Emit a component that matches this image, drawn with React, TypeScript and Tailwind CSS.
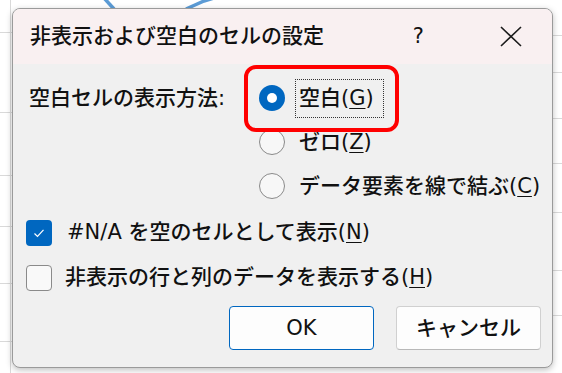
// 背景のシート（グリッド線とグラフの線だけ）
function SheetBackdrop() {
  const leftLines = [32, 112, 175, 226, 283, 341];
  const rightLines = [35, 72, 118, 163, 212, 270, 315];
  return (
    <svg className="absolute inset-0" width="562" height="373" viewBox="0 0 562 373">
      <rect x="0" y="0" width="562" height="373" fill="#ffffff" />
      <line x1="10.5" y1="0" x2="10.5" y2="373" stroke="#d9d9d9" />
      {leftLines.map(y => (
        <line key={'l' + y} x1="0" y1={y + 0.5} x2="12" y2={y + 0.5} stroke="#d9d9d9" />
      ))}
      {rightLines.map(y => (
        <line key={'r' + y} x1="552" y1={y + 0.5} x2="562" y2={y + 0.5} stroke="#d9d9d9" />
      ))}
      <path d="M104 -2 L114 9" stroke="#5b9bd5" strokeWidth="3.5" fill="none" />
      <path d="M186 9 L204 1 L214 -2" stroke="#5b9bd5" strokeWidth="3.5" fill="none" />
    </svg>
  );
}

function Radio({ checked }: { checked?: boolean }) {
  if (checked) {
    return (
      <span className="flex h-[26px] w-[26px] shrink-0 items-center justify-center rounded-full bg-[#0067c0]">
        <span className="h-[10px] w-[10px] rounded-full bg-white" />
      </span>
    );
  }
  return <span className="h-[26px] w-[26px] shrink-0 rounded-full border-[1.5px] border-[#8a8a8a] bg-[#f7f7f7]" />;
}

function Checkbox({ checked }: { checked?: boolean }) {
  if (checked) {
    return (
      <span className="flex h-[26px] w-[26px] shrink-0 items-center justify-center rounded-[4px] bg-[#0067c0]">
        <svg width="14" height="14" viewBox="0 0 14 14">
          <path d="M2.5 7.5 L5.5 10.5 L11.5 3.8" stroke="#ffffff" strokeWidth="1.2" fill="none" />
        </svg>
      </span>
    );
  }
  return <span className="h-[26px] w-[26px] shrink-0 rounded-[4px] border-[1.5px] border-[#8a8a8a] bg-[#f9f9f9]" />;
}

// 下線付きのアクセスキー
function Key({ k }: { k: string }) {
  return <span className="underline underline-offset-[3px] decoration-1">{k}</span>;
}

export default function App() {
  return (
    <div
      className="relative h-[373px] w-[562px] overflow-hidden pl-[12px] pt-[8px] font-medium text-[#111111]"
      style={{ fontFamily: '"DejaVu Sans", "Noto Sans CJK JP", sans-serif' }}
    >
      <SheetBackdrop />

      <div className="relative flex h-[360px] w-[541px] flex-col overflow-hidden rounded-[8px] border border-[#9a9a9a] bg-[#f0f0f0] shadow-[0_2px_6px_rgba(0,0,0,0.25)]">
        {/* タイトルバー */}
        <div className="flex h-[55px] shrink-0 items-center bg-[#f9f0f1] pl-[17px] text-[21px] leading-none">
          <span className="flex-1">非表示および空白のセルの設定</span>
          <span className="mr-[76px] text-[21px]">?</span>
          <svg className="mr-[30px]" width="22" height="21" viewBox="0 0 22 21">
            <path d="M1 1 L21 20 M21 1 L1 20" stroke="#1b1b1b" strokeWidth="1.6" fill="none" />
          </svg>
        </div>

        {/* 本文 */}
        <div className="flex flex-1 flex-col pt-[12px] text-[21px] leading-none">
          <div className="flex">
            <div className="flex h-[44px] w-[246px] shrink-0 items-center pl-[16px]">空白セルの表示方法:</div>
            <div className="flex flex-col">
              <div className="relative flex h-[44px] items-center">
                <Radio checked />
                <span className="ml-[10px] border border-dotted border-[#333] py-[8px] pl-[3px] pr-[9px]">
                  空白(<Key k="G" />)
                </span>
                <span className="absolute left-[-15px] top-[-11px] h-[67px] w-[155px] rounded-[12px] border-[4px] border-[#ff0000]" />
              </div>
              <div className="flex h-[44px] items-center">
                <Radio />
                <span className="ml-[14px]">
                  ゼロ(<Key k="Z" />)
                </span>
              </div>
              <div className="flex h-[44px] items-center">
                <Radio />
                <span className="ml-[14px]">
                  データ要素を線で結ぶ(<Key k="C" />)
                </span>
              </div>
            </div>
          </div>

          <div className="mt-[2px] flex h-[45px] items-center pl-[13px]">
            <Checkbox checked />
            <span className="ml-[15px]">
              #N/A を空のセルとして表示(<Key k="N" />)
            </span>
          </div>
          <div className="flex h-[45px] items-center pl-[13px]">
            <Checkbox />
            <span className="ml-[13px]">
              非表示の行と列のデータを表示する(<Key k="H" />)
            </span>
          </div>

          <div className="mt-[6px] flex justify-end gap-[22px] pr-[11px]">
            <button className="flex h-[44px] w-[145px] items-center justify-center rounded-[4px] border border-[#0067c0] bg-[#fdfdfd] text-[21px]">
              OK
            </button>
            <button className="flex h-[44px] w-[145px] items-center justify-center rounded-[4px] border border-[#d0d0d0] border-b-[#b8b8b8] bg-[#fdfdfd] text-[21px]">
              キャンセル
            </button>
          </div>
        </div>
      </div>
    </div>
  );
}
